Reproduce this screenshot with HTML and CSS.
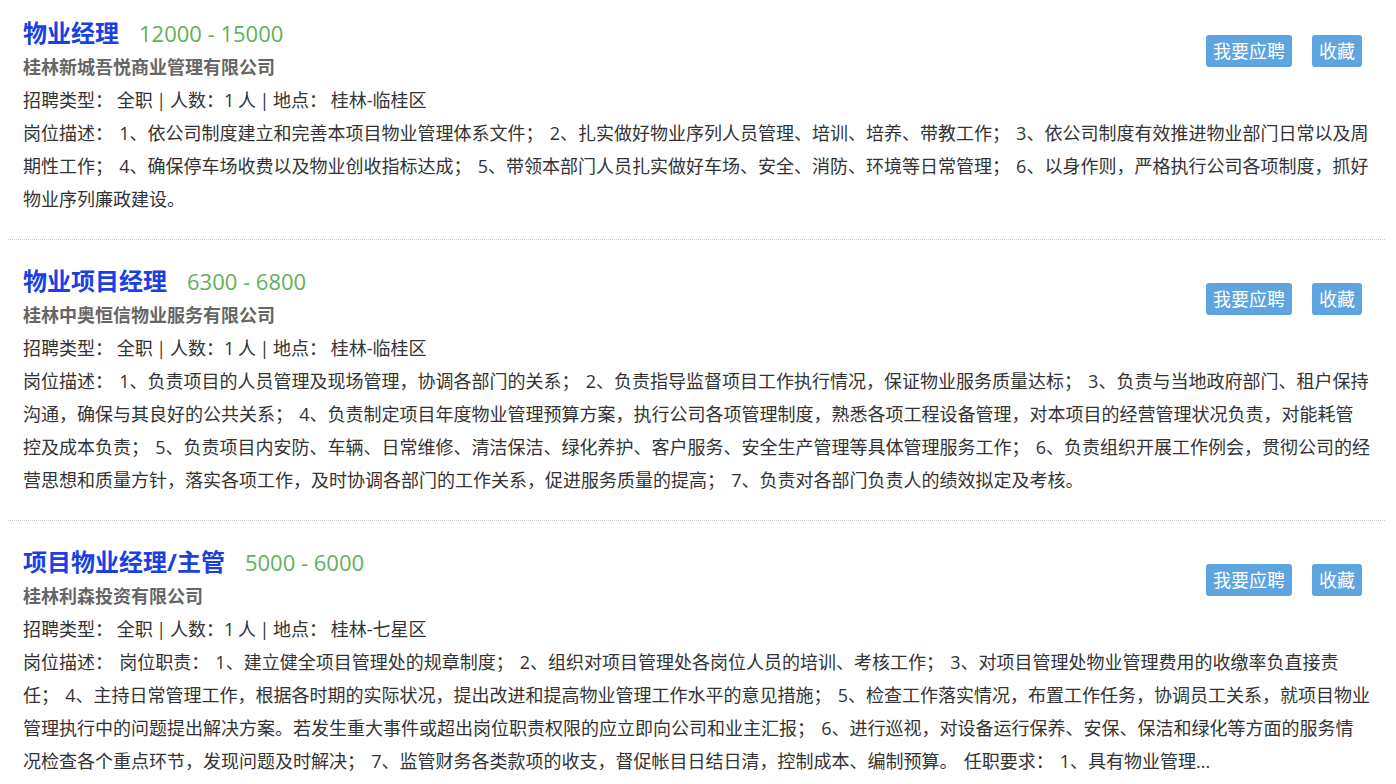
FILE: index.html
```html
<!DOCTYPE html>
<html lang="zh-CN">
<head>
    <meta charset="UTF-8">
    <title>招聘职位</title>
    <link rel="stylesheet" href="styles.css">
</head>
<body>
    <div class="job-list">
        <div class="job">
            <div class="job-head">
                <div class="job-main">
                    <div class="job-title">
                        <a class="job-name" href="#">物业经理</a>
                        <span class="job-salary">12000 - 15000</span>
                    </div>
                    <div class="job-company">桂林新城吾悦商业管理有限公司</div>
                </div>
                <div class="job-actions">
                    <a class="btn" href="#">我要应聘</a>
                    <a class="btn" href="#">收藏</a>
                </div>
            </div>
            <p class="job-info">招聘类型： 全职 | 人数：1 人 | 地点： 桂林-临桂区</p>
            <p class="job-desc">岗位描述： 1、依公司制度建立和完善本项目物业管理体系文件； 2、扎实做好物业序列人员管理、培训、培养、带教工作； 3、依公司制度有效推进物业部门日常以及周期性工作； 4、确保停车场收费以及物业创收指标达成； 5、带领本部门人员扎实做好车场、安全、消防、环境等日常管理； 6、以身作则，严格执行公司各项制度，抓好物业序列廉政建设。</p>
        </div>

        <div class="job">
            <div class="job-head">
                <div class="job-main">
                    <div class="job-title">
                        <a class="job-name" href="#">物业项目经理</a>
                        <span class="job-salary">6300 - 6800</span>
                    </div>
                    <div class="job-company">桂林中奥恒信物业服务有限公司</div>
                </div>
                <div class="job-actions">
                    <a class="btn" href="#">我要应聘</a>
                    <a class="btn" href="#">收藏</a>
                </div>
            </div>
            <p class="job-info">招聘类型： 全职 | 人数：1 人 | 地点： 桂林-临桂区</p>
            <p class="job-desc">岗位描述： 1、负责项目的人员管理及现场管理，协调各部门的关系； 2、负责指导监督项目工作执行情况，保证物业服务质量达标； 3、负责与当地政府部门、租户保持沟通，确保与其良好的公共关系； 4、负责制定项目年度物业管理预算方案，执行公司各项管理制度，熟悉各项工程设备管理，对本项目的经营管理状况负责，对能耗管控及成本负责； 5、负责项目内安防、车辆、日常维修、清洁保洁、绿化养护、客户服务、安全生产管理等具体管理服务工作； 6、负责组织开展工作例会，贯彻公司的经营思想和质量方针，落实各项工作，及时协调各部门的工作关系，促进服务质量的提高； 7、负责对各部门负责人的绩效拟定及考核。</p>
        </div>

        <div class="job">
            <div class="job-head">
                <div class="job-main">
                    <div class="job-title">
                        <a class="job-name" href="#">项目物业经理/主管</a>
                        <span class="job-salary">5000 - 6000</span>
                    </div>
                    <div class="job-company">桂林利森投资有限公司</div>
                </div>
                <div class="job-actions">
                    <a class="btn" href="#">我要应聘</a>
                    <a class="btn" href="#">收藏</a>
                </div>
            </div>
            <p class="job-info">招聘类型： 全职 | 人数：1 人 | 地点： 桂林-七星区</p>
            <p class="job-desc">岗位描述： 岗位职责： 1、建立健全项目管理处的规章制度； 2、组织对项目管理处各岗位人员的培训、考核工作； 3、对项目管理处物业管理费用的收缴率负直接责任； 4、主持日常管理工作，根据各时期的实际状况，提出改进和提高物业管理工作水平的意见措施； 5、检查工作落实情况，布置工作任务，协调员工关系，就项目物业管理执行中的问题提出解决方案。若发生重大事件或超出岗位职责权限的应立即向公司和业主汇报； 6、进行巡视，对设备运行保养、安保、保洁和绿化等方面的服务情况检查各个重点环节，发现问题及时解决； 7、监管财务各类款项的收支，督促帐目日结日清，控制成本、编制预算。 任职要求： 1、具有物业管理...</p>
        </div>
    </div>
</body>
</html>
```

FILE: styles.css
```css
body {
    margin: 0;
    color: #333;
    background: #fff;
    font-family: "Open Sans", "Noto Sans CJK SC", sans-serif;
    font-size: 18px;
}
.job-list {
    margin: 0 11px 0 8px;
}
.job {
    padding: 22px 15px 23px;
    border-bottom: 1px dotted #c8c8c8;
}
/* 第一条贴近顶部 */
.job:first-child {
    padding-top: 14px;
}
.job-head {
    display: flex;
    justify-content: space-between;
    align-items: center;
}
.job-title {
    display: flex;
    align-items: baseline;
    gap: 20px;
    height: 37px;
    line-height: 37px;
}
.job-name {
    color: #1a3fe4;
    font-size: 24px;
    font-weight: bold;
    text-decoration: none;
}
.job-salary {
    color: #5fb15c;
    font-size: 22px;
}
.job-company {
    color: #666;
    font-weight: bold;
    line-height: 33px;
}
.job-actions {
    display: flex;
    gap: 20px;
    margin: 3px 8px 0 0;
}
.btn {
    display: block;
    height: 32px;
    line-height: 32px;
    padding: 0 7px;
    background-color: #5ea5e0;
    color: #fff;
    border-radius: 3px;
    text-decoration: none;
}
.job-info,
.job-desc {
    margin: 0;
    line-height: 33px;
}
.job-info {
    word-spacing: -1px;
}
.job-desc {
    word-spacing: 1.5px;
}
```
